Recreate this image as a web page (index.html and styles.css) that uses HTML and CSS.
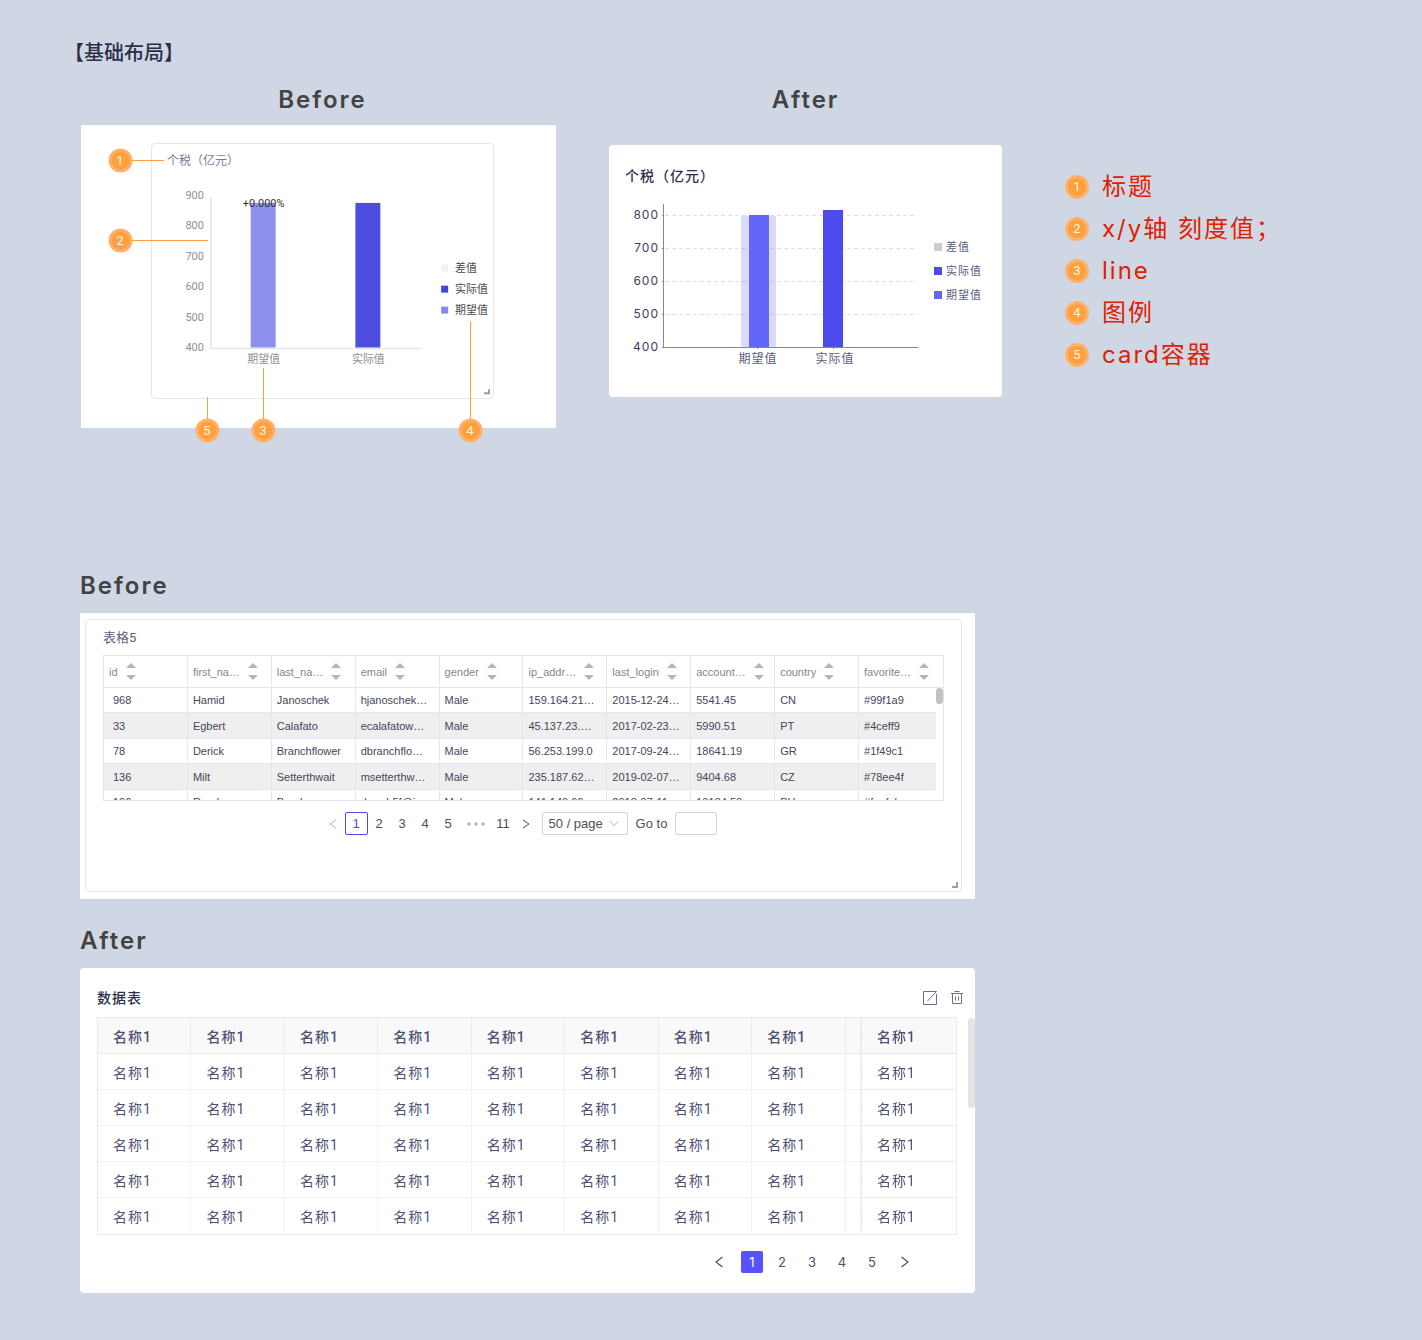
FILE: index.html
```html
<!DOCTYPE html>
<html lang="zh-CN">
<head>
    <meta charset="UTF-8">
    <meta name="viewport" content="width=device-width, initial-scale=1.0">
    <title>基础布局</title>
    <link rel="stylesheet" href="styles.css">
</head>
<body>
    <h1>【基础布局】</h1>

    <!-- Chart comparison -->
    <section class="chart-section">
        <div class="before-column">
            <h2>Before</h2>
            <div class="before-panel">
                <div class="old-card">
                    <h3 class="old-title">个税（亿元）</h3>
                    <svg class="old-chart" viewBox="0 0 342 229">
                        <g class="old-axis-text" text-anchor="end">
                            <text x="52" y="29">900</text>
                            <text x="52" y="59">800</text>
                            <text x="52" y="90">700</text>
                            <text x="52" y="120">600</text>
                            <text x="52" y="151">500</text>
                            <text x="52" y="182">400</text>
                        </g>
                        <path d="M59 27V179H270" fill="none" stroke="#e6e6e8" stroke-width="1.5"/>
                        <rect x="99" y="33" width="25" height="145" fill="#8d8fec"/>
                        <rect x="204" y="33" width="25" height="145" fill="#4c4cde"/>
                        <text class="old-diff" x="112" y="37" text-anchor="middle">+0.000%</text>
                        <g class="old-axis-text" text-anchor="middle">
                            <text x="112" y="194">期望值</text>
                            <text x="217" y="194">实际值</text>
                        </g>
                        <rect x="290" y="95" width="7" height="7" fill="#f0f0f5"/>
                        <rect x="290" y="116" width="7" height="7" fill="#4645e0"/>
                        <rect x="290" y="137" width="7" height="7" fill="#8789ec"/>
                        <g class="old-legend-text">
                            <text x="304" y="102">差值</text>
                            <text x="304" y="123">实际值</text>
                            <text x="304" y="144">期望值</text>
                        </g>
                        <path d="M338 220V224H333" fill="none" stroke="#a0a0a0" stroke-width="2"/>
                    </svg>
                </div>

                <!-- Numbered callouts drawn over the panel -->
                <svg class="callouts" viewBox="0 0 475 303">
                    <path d="M51 35.500H83M51 115.500H127M126.500 272V294M182.500 243V294M389.500 196V294" stroke="#ffa03c" fill="none"/>
                    <g class="callout-dots">
                        <circle cx="39.500" cy="35.500" r="10.500"/>
                        <circle cx="39.500" cy="115.500" r="10.500"/>
                        <circle cx="126.500" cy="305.500" r="10.500"/>
                        <circle cx="182.500" cy="305.500" r="10.500"/>
                        <circle cx="389.500" cy="305.500" r="10.500"/>
                    </g>
                    <g class="callout-text" text-anchor="middle">
                        <text x="39" y="40">1</text>
                        <text x="39" y="120">2</text>
                        <text x="126" y="310">5</text>
                        <text x="182" y="310">3</text>
                        <text x="389" y="310">4</text>
                    </g>
                </svg>
            </div>
        </div>

        <div class="after-column">
            <h2>After</h2>
            <div class="new-card chart-card">
                <h3 class="new-title">个税（亿元）</h3>
                <svg class="new-chart" viewBox="0 0 393 202">
                    <g stroke="#dfdfe2" stroke-dasharray="4 3">
                        <path d="M56 20.500H309M56 53.500H309M56 86.500H309M56 119.500H309"/>
                    </g>
                    <g class="new-axis-text" text-anchor="end">
                        <text x="50" y="24">800</text>
                        <text x="50" y="57">700</text>
                        <text x="50" y="90">600</text>
                        <text x="50" y="123">500</text>
                        <text x="50" y="156">400</text>
                    </g>
                    <rect x="132" y="21" width="35" height="131" rx="1" fill="#6266fb" fill-opacity="0.24"/>
                    <rect x="140" y="20" width="20" height="132" fill="#6266fb"/>
                    <rect x="214" y="15" width="20" height="137" fill="#4b4aec"/>
                    <path d="M54.500 9V152.500H309M53 20.500H55M53 53.500H55M53 86.500H55M53 119.500H55M53 152.500H55M148.500 152V154M224.500 152V154" fill="none" stroke="#85869c"/>
                    <g class="new-label" text-anchor="middle">
                        <text x="149" y="168">期望值</text>
                        <text x="226" y="168">实际值</text>
                    </g>
                    <rect x="325" y="48" width="8" height="8" fill="#cdcdcd"/>
                    <rect x="325" y="72" width="8" height="8" fill="#4b4aec"/>
                    <rect x="325" y="96" width="8" height="8" fill="#6266fb"/>
                    <g class="new-legend-text">
                        <text x="337" y="56">差值</text>
                        <text x="337" y="80">实际值</text>
                        <text x="337" y="104">期望值</text>
                    </g>
                </svg>
            </div>
        </div>

        <ol class="notes">
            <li><span class="dot">1</span>标题</li>
            <li><span class="dot">2</span>x/y轴 刻度值；</li>
            <li><span class="dot">3</span>line</li>
            <li><span class="dot">4</span>图例</li>
            <li><span class="dot">5</span>card容器</li>
        </ol>
    </section>

    <!-- Table comparison -->
    <section class="table-section">
        <h2>Before</h2>
        <div class="old-table-panel">
            <div class="old-card old-table-card">
                <h3 class="old-title">表格5</h3>
                <div class="old-table-box">
                    <table class="old-table">
                        <thead>
                            <tr>
                                <th><div class="th-inner"><span>id</span><i class="sorter"></i></div></th>
                                <th><div class="th-inner"><span>first_na…</span><i class="sorter"></i></div></th>
                                <th><div class="th-inner"><span>last_na…</span><i class="sorter"></i></div></th>
                                <th><div class="th-inner"><span>email</span><i class="sorter"></i></div></th>
                                <th><div class="th-inner"><span>gender</span><i class="sorter"></i></div></th>
                                <th><div class="th-inner"><span>ip_addr…</span><i class="sorter"></i></div></th>
                                <th><div class="th-inner"><span>last_login</span><i class="sorter"></i></div></th>
                                <th><div class="th-inner"><span>account…</span><i class="sorter"></i></div></th>
                                <th><div class="th-inner"><span>country</span><i class="sorter"></i></div></th>
                                <th><div class="th-inner"><span>favorite…</span><i class="sorter"></i></div></th>
                            </tr>
                        </thead>
                        <tbody>
                            <tr><td>968</td><td>Hamid</td><td>Janoschek</td><td>hjanoschek…</td><td>Male</td><td>159.164.21…</td><td>2015-12-24…</td><td>5541.45</td><td>CN</td><td>#99f1a9</td></tr>
                            <tr><td>33</td><td>Egbert</td><td>Calafato</td><td>ecalafatow…</td><td>Male</td><td>45.137.23.…</td><td>2017-02-23…</td><td>5990.51</td><td>PT</td><td>#4ceff9</td></tr>
                            <tr><td>78</td><td>Derick</td><td>Branchflower</td><td>dbranchflo…</td><td>Male</td><td>56.253.199.0</td><td>2017-09-24…</td><td>18641.19</td><td>GR</td><td>#1f49c1</td></tr>
                            <tr><td>136</td><td>Milt</td><td>Setterthwait</td><td>msetterthw…</td><td>Male</td><td>235.187.62…</td><td>2019-02-07…</td><td>9404.68</td><td>CZ</td><td>#78ee4f</td></tr>
                            <tr><td>196</td><td>Rand</td><td>Brugh</td><td>rbrugh5f@i…</td><td>Male</td><td>141.140.69…</td><td>2018-07-11…</td><td>10134.50</td><td>PH</td><td>#feefeb</td></tr>
                        </tbody>
                    </table>
                    <div class="old-scroll"></div>
                </div>
                <div class="old-pagination">
                    <button type="button" class="arrow disabled" aria-label="Previous"><svg width="8" height="10" viewBox="0 0 8 10"><path d="M7 1L1 5L7 9"/></svg></button>
                    <button type="button" class="active">1</button>
                    <button type="button">2</button>
                    <button type="button">3</button>
                    <button type="button">4</button>
                    <button type="button">5</button>
                    <button type="button" class="more" aria-label="Next 5 pages"><svg width="18" height="4" viewBox="0 0 18 4"><circle cx="2" cy="2" r="1.700"/><circle cx="9" cy="2" r="1.700"/><circle cx="16" cy="2" r="1.700"/></svg></button>
                    <button type="button">11</button>
                    <button type="button" class="arrow" aria-label="Next"><svg width="8" height="10" viewBox="0 0 8 10"><path d="M1 1L7 5L1 9"/></svg></button>
                    <div class="page-size">
                        <select aria-label="Page size"><option>50 / page</option></select>
                        <svg width="10" height="7" viewBox="0 0 10 7"><path d="M1 1L5 6L9 1"/></svg>
                    </div>
                    <label for="goto-page">Go to</label>
                    <input type="text" id="goto-page">
                </div>
                <svg class="resize-handle" width="6" height="6" viewBox="0 0 6 6"><path d="M5 0V5H0" fill="none" stroke="#a0a0a0" stroke-width="2"/></svg>
            </div>
        </div>

        <h2>After</h2>
        <div class="new-card new-table-card">
            <div class="new-table-header">
                <h3 class="new-title">数据表</h3>
                <button type="button" class="icon-button" aria-label="编辑">
                    <svg width="16" height="16" viewBox="0 0 16 16"><path d="M14.500 1.500H1.500V14.500H14.500V4M5.500 11L14.500 1.500"/></svg>
                </button>
                <button type="button" class="icon-button" aria-label="删除">
                    <svg width="14" height="16" viewBox="0 0 14 16"><path d="M1 3.500H13M4.500 1.500H9.500M2.500 3.500V13.500H11.500V3.500M5.500 6.500V10.500M8.500 6.500V10.500"/></svg>
                </button>
            </div>
            <div class="new-table-box">
                <table class="new-table">
                    <thead>
                        <tr><th>名称1</th><th>名称1</th><th>名称1</th><th>名称1</th><th>名称1</th><th>名称1</th><th>名称1</th><th>名称1</th><th>名称1</th><th class="fixed">名称1</th></tr>
                    </thead>
                    <tbody>
                        <tr><td>名称1</td><td>名称1</td><td>名称1</td><td>名称1</td><td>名称1</td><td>名称1</td><td>名称1</td><td>名称1</td><td>名称1</td><td class="fixed">名称1</td></tr>
                        <tr><td>名称1</td><td>名称1</td><td>名称1</td><td>名称1</td><td>名称1</td><td>名称1</td><td>名称1</td><td>名称1</td><td>名称1</td><td class="fixed">名称1</td></tr>
                        <tr><td>名称1</td><td>名称1</td><td>名称1</td><td>名称1</td><td>名称1</td><td>名称1</td><td>名称1</td><td>名称1</td><td>名称1</td><td class="fixed">名称1</td></tr>
                        <tr><td>名称1</td><td>名称1</td><td>名称1</td><td>名称1</td><td>名称1</td><td>名称1</td><td>名称1</td><td>名称1</td><td>名称1</td><td class="fixed">名称1</td></tr>
                        <tr><td>名称1</td><td>名称1</td><td>名称1</td><td>名称1</td><td>名称1</td><td>名称1</td><td>名称1</td><td>名称1</td><td>名称1</td><td class="fixed">名称1</td></tr>
                    </tbody>
                </table>
            </div>
            <div class="new-scroll"></div>
            <div class="new-pagination">
                <button type="button" class="arrow" aria-label="上一页"><svg width="8" height="12" viewBox="0 0 8 12"><path d="M7.500 1L1 6L7.500 11"/></svg></button>
                <button type="button" class="active">1</button>
                <button type="button">2</button>
                <button type="button">3</button>
                <button type="button">4</button>
                <button type="button">5</button>
                <button type="button" class="arrow" aria-label="下一页"><svg width="8" height="12" viewBox="0 0 8 12"><path d="M0.500 1L7 6L0.500 11"/></svg></button>
            </div>
        </div>
    </section>
</body>
</html>
```

FILE: styles.css
```css
* {
    box-sizing: border-box;
}
body {
    margin: 0;
    padding: 38px 64px 47px;
    background: #d0d7e4;
    color: #2c2f4a;
    font-family: Roboto, "Noto Sans CJK SC", sans-serif;
}
h1, h2, h3 {
    margin: 0;
}
h1 {
    font-size: 20px;
    line-height: 30px;
    font-weight: 500;
}
h2 {
    font-family: Inter, sans-serif;
    font-size: 24px;
    line-height: 32px;
    font-weight: 600;
    letter-spacing: 2px;
    color: #434343;
}
button {
    padding: 0;
    border: none;
    background: none;
    font-family: inherit;
    cursor: pointer;
}
svg {
    display: block;
}

/* Charts */
.chart-section {
    display: grid;
    grid-template-columns: 475fr 393fr 287fr;
    gap: 53px;
    padding: 0 16px 0 17px;
    margin-top: 16px;
    align-items: start;
}
.before-column h2 {
    padding: 0 62px 0 70px;
    text-align: center;
}
.after-column h2 {
    text-align: center;
}
.before-panel {
    position: relative;
    margin-top: 9px;
    padding: 18px 62px 29px 70px;
    background: #ffffff;
}
.old-card {
    border: 1px solid #e6e7e9;
    border-radius: 4px;
    background: #ffffff;
}
.old-title {
    padding: 8px 15px 0;
    font-size: 12px;
    line-height: 18px;
    font-weight: 400;
    color: #7a7b94;
}
.old-chart {
    width: 100%;
}
.old-axis-text {
    font-size: 11px;
    fill: #8f8f8f;
}
.old-legend-text {
    font-size: 11px;
    fill: #4a4a4a;
}
.old-diff {
    font-size: 11px;
    fill: #333333;
}
.callouts {
    position: absolute;
    top: 0;
    left: 0;
    width: 100%;
    overflow: visible;
}
.callout-dots {
    fill: #ffa03c;
    stroke: #fdb16a;
    stroke-width: 3px;
}
.callout-text {
    font-size: 13px;
    fill: #fff3e2;
}
.new-card {
    border-radius: 4px;
    background: #ffffff;
}
.chart-card {
    margin-top: 29px;
    padding-top: 20px;
}
.new-title {
    padding: 0 16px;
    font-size: 14px;
    line-height: 22px;
    font-weight: 500;
    letter-spacing: 1px;
}
.new-chart {
    width: 100%;
    margin-top: 8px;
}
.new-axis-text {
    font-family: Inter, sans-serif;
    font-size: 12px;
    letter-spacing: 1px;
    fill: #3c3f5c;
}
.new-label {
    font-size: 12px;
    letter-spacing: 1px;
    fill: #5a5d7c;
}
.new-legend-text {
    font-size: 11px;
    letter-spacing: 1px;
    fill: #5a5d7c;
}
.notes {
    display: grid;
    gap: 6px;
    margin: 85px 0 0;
    padding: 0 0 0 10px;
    list-style: none;
}
.notes li {
    display: flex;
    align-items: center;
    gap: 13px;
    font-family: Inter, "Noto Sans CJK SC", sans-serif;
    font-size: 24px;
    line-height: 36px;
    letter-spacing: 2px;
    color: #dd2200;
}
.dot {
    width: 24px;
    height: 24px;
    border: 3px solid #fdb16a;
    border-radius: 50%;
    background: #ffa03c;
    color: #fff3e2;
    font-family: Roboto, sans-serif;
    font-size: 13px;
    line-height: 18px;
    letter-spacing: 0;
    text-align: center;
}

/* Tables */
.table-section {
    width: 70.4%;
    margin-top: 142px;
    padding-left: 16px;
}
.old-table-panel {
    margin: 11px 0 26px;
    padding: 6px 13px 7px 5px;
    background: #ffffff;
}
.old-table-card {
    position: relative;
    padding: 0 17px 56px;
}
.old-table-card .old-title {
    padding: 9px 0 8px;
    font-size: 13px;
    color: #5c5f80;
}
.old-table-box {
    position: relative;
    height: 146px;
    overflow: hidden;
    border: 1px solid #e4e7f2;
}
.old-table {
    width: 100%;
    table-layout: fixed;
    border-collapse: separate;
    border-spacing: 0;
    font-family: "Liberation Sans", sans-serif;
    font-size: 11px;
    color: #45465a;
}
.old-table th,
.old-table td {
    height: 25px;
    padding: 0 0 0 5px;
    border-right: 1px solid #e4e7f2;
    border-bottom: 1px solid #e4e7f2;
    text-align: left;
    font-weight: 400;
    white-space: nowrap;
}
.old-table th {
    height: 32px;
    color: #85868c;
}
.old-table td:first-child {
    padding-left: 9px;
}
.old-table th:last-child,
.old-table td:last-child {
    border-right: none;
}
.old-table tbody tr:nth-child(even) td {
    height: 26px;
    background: #efefef;
}
.th-inner {
    display: flex;
    align-items: center;
    gap: 8px;
}
.sorter {
    display: grid;
    gap: 7px;
}
.sorter::before,
.sorter::after {
    content: "";
    border: 5px solid transparent;
    border-top-width: 0;
    border-bottom: 5px solid #b1b5bd;
}
.sorter::after {
    border-top: 5px solid #b1b5bd;
    border-bottom-width: 0;
}
.old-scroll {
    position: absolute;
    top: 32px;
    right: 0;
    bottom: 0;
    width: 7px;
    background: #ffffff;
}
.old-scroll::before {
    content: "";
    display: block;
    height: 16px;
    border-radius: 4px;
    background: #c1c2c5;
}
.old-pagination {
    display: flex;
    justify-content: center;
    align-items: center;
    margin-top: 11px;
    font-family: "Liberation Sans", sans-serif;
    font-size: 13px;
    color: #505050;
}
.old-pagination button {
    width: 23px;
    height: 23px;
    border-radius: 2px;
    font-size: 13px;
    color: #505050;
}
.old-pagination .active {
    border: 1px solid #4b4aec;
    color: #4b4aec;
}
.old-pagination svg {
    margin: auto;
    fill: none;
    stroke: #505050;
}
.old-pagination .more {
    width: 32px;
}
.old-pagination .more svg {
    fill: #b8b8b8;
    stroke: none;
}
.old-pagination .disabled svg {
    stroke: #b8b8b8;
}
.page-size {
    position: relative;
    margin: 0 8px 0 4px;
}
.page-size select {
    width: 86px;
    height: 23px;
    padding: 0 6px;
    border: 1px solid #d5d5d5;
    border-radius: 2px;
    background: #ffffff;
    appearance: none;
    font-family: inherit;
    font-size: 13px;
    color: #505050;
}
.page-size svg {
    position: absolute;
    top: 8px;
    right: 9px;
    stroke: #b8b8b8;
}
.old-pagination input {
    width: 42px;
    height: 23px;
    margin: 0 8px;
    border: 1px solid #d5d5d5;
    border-radius: 2px;
}
.resize-handle {
    position: absolute;
    right: 3px;
    bottom: 3px;
}

.new-table-card {
    position: relative;
    margin-top: 11px;
    padding: 19px 18px 20px 17px;
}
.new-table-header {
    display: flex;
    align-items: center;
    gap: 12px;
    margin-right: -7px;
}
.new-table-header .new-title {
    flex: 1;
    padding: 0;
}
.icon-button svg {
    fill: none;
    stroke: #6c6f8c;
}
.new-table-box {
    overflow: hidden;
    margin-top: 8px;
    border: 1px solid #ebebed;
}
.new-table {
    width: 109%;
    table-layout: fixed;
    border-collapse: separate;
    border-spacing: 0;
    font-size: 14px;
    letter-spacing: 1px;
    color: #4e5174;
}
.new-table th,
.new-table td {
    height: 36px;
    padding: 0 0 0 15px;
    border-right: 1px solid #f2f2f4;
    border-bottom: 1px solid #f2f2f4;
    background: #ffffff;
    text-align: left;
    font-weight: 400;
    white-space: nowrap;
}
.new-table th {
    border-color: #ebebed;
    background: #f9f9f9;
    font-weight: 500;
}
.new-table tr:last-child td {
    border-bottom: none;
}
.new-table .fixed {
    position: sticky;
    right: 0;
    width: 94px;
    border-right: none;
    box-shadow: -1px 0 2px #dcdeff;
}
.new-scroll {
    position: absolute;
    top: 50px;
    right: 0;
    width: 7px;
    height: 90px;
    border-radius: 4px;
    background: #e4e4e4;
}
.new-pagination {
    display: flex;
    justify-content: flex-end;
    gap: 8px;
    margin: 16px 38px 0 0;
}
.new-pagination button {
    width: 22px;
    height: 22px;
    border-radius: 2px;
    font-family: Inter, sans-serif;
    font-size: 13px;
    color: #4e5174;
}
.new-pagination .arrow {
    margin: 0 3px;
}
.new-pagination .active {
    background: #5552ff;
    color: #ffffff;
}
.new-pagination svg {
    margin: auto;
    fill: none;
    stroke: #4e5174;
    stroke-width: 1.3px;
}
```
